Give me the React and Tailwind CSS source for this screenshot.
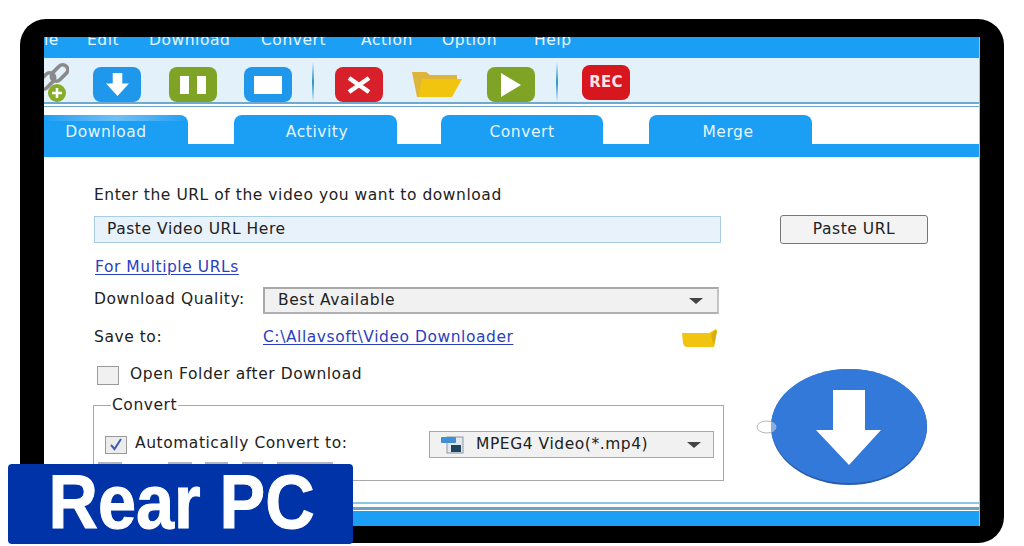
import React from 'react';

const font = { fontFamily: '"DejaVu Sans", sans-serif' };

const ToolButton = ({ color, className = '', children }) => (
  <div className={`w-[48px] h-[35px] rounded-[8px] flex items-center justify-center shrink-0 ${color} ${className}`}>
    {children}
  </div>
);

const Separator = ({ className }) => (
  <div className={`w-[2px] h-[40px] -mt-[5px] bg-gradient-to-b from-transparent via-[#2b93c9] to-transparent shrink-0 ${className}`} />
);

const FolderIcon = () => (
  <svg width="50" height="25" viewBox="0 0 50 25" className="shrink-0">
    <path d="M0 0 H14 L18 3 H45 V7 H11 L7 25 H5 Z" fill="#dcb53a" />
    <path d="M10 7 H50 L40 25 H6 Z" fill="#f1c40f" />
  </svg>
);

const Tab = ({ className, children }) => (
  <div className={`h-[29px] bg-[#1a9ff5] rounded-t-[8px] text-[#e6f4fd] text-[15.5px] pt-[6px] flex items-center justify-center shrink-0 ${className}`}>
    {children}
  </div>
);

const Caret = () => (
  <svg width="14" height="6" viewBox="0 0 14 6"><path d="M0 0 H14 L7 6 Z" fill="#444" /></svg>
);

export default function App() {
  return (
    <div className="relative w-[1024px] h-[546px] bg-white overflow-hidden pt-[19px] pl-[20px] tracking-[0.55px]" style={font}>
      <div className="w-[984px] h-[524px] bg-black rounded-[26px] pt-[18px] pl-[24px] pr-[24px] pb-[17px]">
        <div className="w-[936px] h-[489px] bg-white flex flex-col overflow-hidden border-r border-r-[#e9a5a5] text-[#222]">

          {/* menu, text is cut off at the top like in the picture */}
          <div className="h-[21px] bg-[#1a9ff5] text-[#e6f4fd] text-[15.5px] overflow-hidden shrink-0">
            <div className="flex -mt-[7px] leading-[20px]">
              <span className="w-[43px]">le</span>
              <span className="w-[62px]">Edit</span>
              <span className="w-[112px]">Download</span>
              <span className="w-[100px]">Convert</span>
              <span className="w-[81px]">Action</span>
              <span className="w-[92px]">Option</span>
              <span>Help</span>
            </div>
          </div>

          {/* toolbar */}
          <div className="h-[46px] bg-[#e3f1fb] border-b-2 border-b-[#6fa9cf] flex items-start pt-[9px] shrink-0 overflow-hidden">
            <svg width="25" height="40" viewBox="0 0 25 40" className="shrink-0 -mt-[4px]">
              <g fill="none" stroke="#8a8a8a" strokeWidth="3.6">
                <rect x="6" y="5" width="19" height="10" rx="5" transform="rotate(-45 15.5 10)" />
                <rect x="-7" y="13" width="19" height="10" rx="5" transform="rotate(-45 2.5 18)" />
              </g>
              <circle cx="13" cy="30" r="9" fill="#85ad27" />
              <path d="M8 30 H18 M13 25 V35" stroke="#fff" strokeWidth="2.6" />
            </svg>
            <ToolButton color="bg-[#1f97ea]" className="ml-[24px]">
              <svg width="23" height="25" viewBox="0 0 24 26"><path d="M7 1 H17 V12 H24 L12 25 L0 12 H7 Z" fill="#fff" /></svg>
            </ToolButton>
            <ToolButton color="bg-[#7fa324]" className="ml-[28px]">
              <div className="flex gap-[8px]">
                <div className="w-[9px] h-[18px] bg-white" />
                <div className="w-[9px] h-[18px] bg-white" />
              </div>
            </ToolButton>
            <ToolButton color="bg-[#1f97ea]" className="ml-[27px]">
              <div className="w-[28px] h-[18px] bg-white" />
            </ToolButton>
            <Separator className="ml-[20px]" />
            <ToolButton color="bg-[#d8202a]" className="ml-[21px]">
              <svg width="26" height="18" viewBox="0 0 26 18"><path d="M3 2 L23 16 M23 2 L3 16" stroke="#fff" strokeWidth="4.5" /></svg>
            </ToolButton>
            <div className="ml-[29px] mt-[5px]"><FolderIcon /></div>
            <ToolButton color="bg-[#7fa324]" className="ml-[25px]">
              <svg width="20" height="24" viewBox="0 0 20 24"><path d="M0 0 L20 12 L0 24 Z" fill="#fff" /></svg>
            </ToolButton>
            <Separator className="ml-[21px]" />
            <ToolButton color="bg-[#d8161d]" className="ml-[24px] -mt-[2px] text-[#fbe4e4] text-[15px] font-semibold tracking-[0.2px]">
              REC
            </ToolButton>
          </div>

          <div className="h-[2px] shrink-0" />
          <div className="h-[1px] bg-[#6fa9cf] shrink-0" />

          {/* tabs */}
          <div className="flex items-end h-[37px] pt-[8px] shrink-0">
            <Tab className="w-[144px] pr-[20px] rounded-tl-none bg-gradient-to-r from-[#1a9ff5] via-[#6cc0f5] to-[#1a9ff5] bg-[length:100%_6px] bg-top bg-no-repeat">Download</Tab>
            <Tab className="w-[163px] ml-[46px] pl-[3px]">Activity</Tab>
            <Tab className="w-[162px] ml-[44px]">Convert</Tab>
            <Tab className="w-[163px] ml-[46px] pr-[5px]">Merge</Tab>
          </div>
          <div className="h-[13px] bg-[#1a9ff5] shrink-0" />

          {/* form */}
          <div className="flex-1 flex flex-col pl-[49px] pr-[51px] text-[15.5px] relative min-h-0">
            <div className="mt-[28px] h-[20px] leading-[20px] pl-[1px]">Enter the URL of the video you want to download</div>

            <div className="flex items-center mt-[10px] w-[835px] justify-between">
              <div className="w-[627px] ml-[1px] h-[27px] bg-[#e8f2fa] border border-[#a9cde0] pl-[12px] flex items-center">Paste Video URL Here</div>
              <button className="w-[148px] h-[29px] bg-[#f3f3f3] border border-[#777] rounded-[3px] flex items-center justify-center">Paste URL</button>
            </div>

            <div className="mt-[13px] h-[20px] leading-[20px] pl-[2px]">
              <span className="text-[#2a3fbf] underline underline-offset-2">For Multiple URLs</span>
            </div>

            <div className="flex items-center mt-[10px]">
              <span className="w-[170px] pl-[1px] -mt-[2px]">Download Quality:</span>
              <div className="w-[456px] h-[27px] bg-[#f1f1f1] border-2 border-[#a8a8a8] border-r-[#c4c4c4] border-b-[#b0b0b0] pl-[13px] pr-[14px] flex items-center justify-between">
                <span>Best Available</span>
                <Caret />
              </div>
            </div>

            <div className="flex items-center mt-[14px] w-[624px] h-[20px]">
              <span className="w-[170px] pl-[1px]">Save to:</span>
              <span className="text-[#2a3fbf] underline underline-offset-2">C:\Allavsoft\Video Downloader</span>
              <svg width="35" height="18" viewBox="0 0 35 18" className="ml-auto shrink-0 -mt-[1px]">
                <path d="M0 4 H27 L34 0 L35 2 L32 18 H5 Q2 18 1 14 Z" fill="#f1c40f" />
                <path d="M33 1 L35 2 L32 17 L29 6 Z" fill="#d9ad10" />
              </svg>
            </div>

            <div className="flex items-center mt-[17px] h-[20px] pl-[4px]">
              <div className="w-[22px] h-[19px] bg-[#f0f0f0] border border-[#9a9a9a]" />
              <span className="ml-[11px]">Open Folder after Download</span>
            </div>

            {/* convert group */}
            <div className="relative mt-[20px] w-[631px] h-[76px] border border-[#a8a8a8] pl-[11px] pt-[25px] pr-[9px] shrink-0">
              <span className="absolute -top-[11px] left-[17px] bg-white px-[1px] leading-[20px]">Convert</span>
              <div className="flex items-center h-[27px] justify-between">
                <div className="flex items-center">
                  <div className="w-[22px] h-[18px] bg-[#ececec] border border-[#9a9a9a] flex items-center justify-center">
                    <svg width="14" height="13" viewBox="0 0 14 13"><path d="M2 7 L5.5 11 L12 1" fill="none" stroke="#3b5fb5" strokeWidth="2" /></svg>
                  </div>
                  <span className="ml-[8px] -mt-[1px]">Automatically Convert to:</span>
                </div>
                <div className="w-[285px] h-[27px] bg-[#f1f1f1] border border-[#a8a8a8] pl-[11px] pr-[12px] flex items-center">
                  <svg width="24" height="18" viewBox="0 0 24 18" className="shrink-0">
                    <rect x="6" y="1" width="16" height="16" fill="#e3e8ee" stroke="#8a97a6" />
                    <rect x="0" y="1" width="15" height="6" rx="1" fill="#3f8fd6" />
                    <rect x="10" y="9" width="10" height="7" fill="#1f4660" />
                  </svg>
                  <span className="ml-[11px]">MPEG4 Video(*.mp4)</span>
                  <span className="ml-auto flex"><Caret /></span>
                </div>
              </div>
              {/* second row, almost all of it sits behind the badge */}
              <div className="flex mt-[4px] -ml-[7px]">
                <div className="w-[24px] h-[8px] bg-[#b5b5b5]" />
                <div className="w-[24px] h-[8px] bg-[#b5b5b5] ml-[46px]" />
                <div className="w-[23px] h-[8px] bg-[#b5b5b5] ml-[13px]" />
                <div className="w-[21px] h-[8px] bg-[#b5b5b5] ml-[14px]" />
                <div className="w-[56px] h-[8px] bg-[#b5b5b5] ml-[14px]" />
              </div>
            </div>

            {/* big download button */}
            <svg width="176" height="120" viewBox="0 0 176 120" className="absolute left-[712px] top-[212px]">
              <ellipse cx="93" cy="58" rx="78" ry="58" fill="#2a5cab" />
              <ellipse cx="93" cy="57" rx="78" ry="57" fill="#3279d9" />
              <path d="M77 21 H109 V61 H125 L93 96 L60 61 H77 Z" fill="#fff" />
              <ellipse cx="10.5" cy="58" rx="9.5" ry="6" fill="#fff" fillOpacity="0.4" stroke="#b5b5b5" />
            </svg>
          </div>

          <div className="h-[2px] bg-[#8cc6e6] shrink-0" />
          <div className="h-[3px] shrink-0" />
          <div className="h-[3px] bg-[#6fa2c0] shrink-0" />
          <div className="h-[1px] shrink-0" />
          <div className="h-[15px] bg-[#1a9ff5] shrink-0" />
        </div>
      </div>

      {/* channel badge on top of the screenshot */}
      <div className="absolute left-[8px] top-[464px] w-[345px] h-[80px] bg-[#0033a8] rounded-[4px] overflow-hidden">
        <div className="text-white font-bold text-[76px] leading-[76px] tracking-normal whitespace-nowrap origin-left scale-x-[0.9] pl-[45px] [-webkit-text-stroke:1px_white]" style={{ fontFamily: '"Liberation Sans", sans-serif' }}>
          Rear PC
        </div>
      </div>
    </div>
  );
}
